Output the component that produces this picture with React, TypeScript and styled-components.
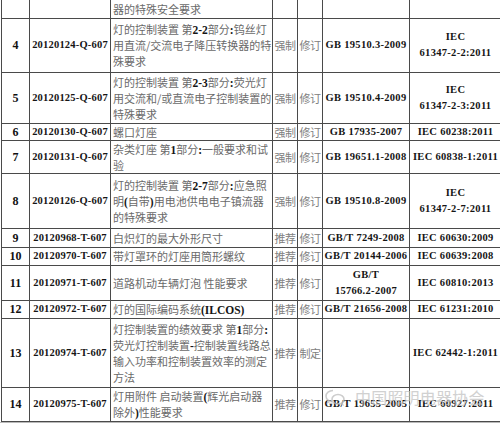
import React from "react";
import styled, { createGlobalStyle } from "styled-components";

const Global = createGlobalStyle`
  html, body { margin: 0; padding: 0; background: #b9b9b9; overflow: hidden; }
  body { width: 500px; height: 423px; }
`;

const Page = styled.div`
  position: relative;
  width: 500px;
  padding-left: 1px;
  box-sizing: border-box;
  background: #fff;
`;

const Table = styled.table`
  border-collapse: collapse;
  table-layout: fixed;
  width: 500px;
  background: #fff;
`;

const Row = styled.tr<{ $h: number }>`
  height: ${(p) => p.$h}px;
`;

const Cell = styled.td<{ $top?: boolean }>`
  border: 1px solid #4a4a4a;
  ${(p) => (p.$top ? "border-top: none;" : "")}
  padding: 0;
  vertical-align: middle;
  line-height: 16px;
  overflow: hidden;
  white-space: nowrap;
`;

const NumCell = styled(Cell)`
  text-align: center;
  font-family: "Liberation Serif", serif;
  font-weight: bold;
  font-size: 12px;
  color: #111;
`;

const CodeCell = styled(Cell)`
  text-align: center;
  font-family: "Liberation Serif", serif;
  font-weight: bold;
  font-size: 10.5px;
  letter-spacing: 0.2px;
  color: #151515;
`;

const TitleCell = styled(Cell)`
  text-align: left;
  padding-left: 2px;
  font-family: "Noto Sans CJK SC", sans-serif;
  font-size: 11px;
  color: #6a6a6a;
`;

const TagCell = styled(Cell)`
  text-align: center;
  font-family: "Noto Sans CJK SC", sans-serif;
  font-size: 11px;
  color: #808080;
  letter-spacing: -0.5px;
`;

const StdCell = styled(Cell)`
  text-align: center;
  font-family: "Liberation Serif", serif;
  font-weight: bold;
  font-size: 10.5px;
  letter-spacing: 0.3px;
  color: #151515;
`;

const B = styled.span`
  font-family: "Liberation Serif", serif;
  font-weight: bold;
  color: #151515;
  font-size: 11.5px;
  line-height: 8px;
`;

const Watermark = styled.div`
  position: absolute;
  left: 324px;
  top: 387px;
  display: flex;
  align-items: center;
  gap: 9px;
  pointer-events: none;
  opacity: 0.75;
`;

const WatermarkText = styled.span`
  font-family: "Noto Sans CJK SC", sans-serif;
  font-size: 16px;
  letter-spacing: 0.2px;
  color: #c2c2c2;
  line-height: 20px;
`;

type R = {
  n: string;
  code: string;
  title: React.ReactNode;
  type: string;
  op: string;
  gb: React.ReactNode;
  iec: React.ReactNode;
  h: number;
};

const rows: R[] = [
  {
    n: "4",
    code: "20120124-Q-607",
    title: (
      <>
        灯的控制装置 第<B>2-2</B>部分<B>:</B>钨丝灯
        <br />
        用直流/交流电子降压转换器的特
        <br />
        殊要求
      </>
    ),
    type: "强制",
    op: "修订",
    gb: "GB 19510.3-2009",
    iec: (
      <>
        IEC
        <br />
        61347-2-2:2011
      </>
    ),
    h: 54,
  },
  {
    n: "5",
    code: "20120125-Q-607",
    title: (
      <>
        灯的控制装置 第<B>2-3</B>部分<B>:</B>荧光灯
        <br />
        用交流和/或直流电子控制装置的
        <br />
        特殊要求
      </>
    ),
    type: "强制",
    op: "修订",
    gb: "GB 19510.4-2009",
    iec: (
      <>
        IEC
        <br />
        61347-2-3:2011
      </>
    ),
    h: 51,
  },
  {
    n: "6",
    code: "20120130-Q-607",
    title: <>螺口灯座</>,
    type: "强制",
    op: "修订",
    gb: "GB 17935-2007",
    iec: "IEC 60238:2011",
    h: 17,
  },
  {
    n: "7",
    code: "20120131-Q-607",
    title: (
      <>
        杂类灯座 第<B>1</B>部分<B>:</B>一般要求和试
        <br />
        验
      </>
    ),
    type: "强制",
    op: "修订",
    gb: "GB 19651.1-2008",
    iec: "IEC 60838-1:2011",
    h: 33,
  },
  {
    n: "8",
    code: "20120126-Q-607",
    title: (
      <>
        灯的控制装置 第<B>2-7</B>部分<B>:</B>应急照
        <br />
        明<B>(</B>自带<B>)</B>用电池供电电子镇流器
        <br />
        的特殊要求
      </>
    ),
    type: "强制",
    op: "修订",
    gb: "GB 19510.8-2009",
    iec: (
      <>
        IEC
        <br />
        61347-2-7:2011
      </>
    ),
    h: 55,
  },
  {
    n: "9",
    code: "20120968-T-607",
    title: <>白炽灯的最大外形尺寸</>,
    type: "推荐",
    op: "修订",
    gb: "GB/T 7249-2008",
    iec: "IEC 60630:2009",
    h: 19,
  },
  {
    n: "10",
    code: "20120970-T-607",
    title: <>带灯罩环的灯座用筒形螺纹</>,
    type: "推荐",
    op: "修订",
    gb: "GB/T 20144-2006",
    iec: "IEC 60639:2008",
    h: 18,
  },
  {
    n: "11",
    code: "20120971-T-607",
    title: <>道路机动车辆灯泡 性能要求</>,
    type: "推荐",
    op: "修订",
    gb: (
      <>
        GB/T
        <br />
        15766.2-2007
      </>
    ),
    iec: "IEC 60810:2013",
    h: 35,
  },
  {
    n: "12",
    code: "20120972-T-607",
    title: (
      <>
        灯的国际编码系统<B>(ILCOS)</B>
      </>
    ),
    type: "推荐",
    op: "修订",
    gb: "GB/T 21656-2008",
    iec: "IEC 61231:2010",
    h: 18,
  },
  {
    n: "13",
    code: "20120974-T-607",
    title: (
      <>
        灯控制装置的绩效要求 第<B>1</B>部分<B>:</B>
        <br />
        荧光灯控制装置<B>-</B>控制装置线路总
        <br />
        输入功率和控制装置效率的测定
        <br />
        方法
      </>
    ),
    type: "推荐",
    op: "制定",
    gb: "",
    iec: "IEC 62442-1:2011",
    h: 69,
  },
  {
    n: "14",
    code: "20120975-T-607",
    title: (
      <>
        灯用附件 启动装置<B>(</B>辉光启动器
        <br />
        除外<B>)</B>性能要求
      </>
    ),
    type: "推荐",
    op: "修订",
    gb: "GB/T 19655-2005",
    iec: "IEC 60927:2011",
    h: 34,
  },
];

const WeChatMark = () => (
  <svg width="22" height="18" viewBox="0 0 22 18" fill="none" stroke="#bdbdbd" strokeWidth="1.6">
    <path d="M9 2.5c-4 0-7 2.6-7 5.7 0 1.7.9 3.2 2.4 4.2l-.6 2 2.3-1.2c.9.3 1.9.5 2.9.5" />
    <path d="M14 6.5c3.3 0 6 2.2 6 4.8 0 1.4-.7 2.6-1.9 3.5l.5 1.7-2-1c-.8.3-1.7.4-2.6.4-3.3 0-6-2.1-6-4.7s2.7-4.7 6-4.7z" />
  </svg>
);

export default function App() {
  return (
    <>
      <Global />
      <Page>
        <Table>
          <colgroup>
            <col style={{ width: 28 }} />
            <col style={{ width: 81 }} />
            <col style={{ width: 162 }} />
            <col style={{ width: 25 }} />
            <col style={{ width: 25 }} />
            <col style={{ width: 87 }} />
            <col style={{ width: 92 }} />
          </colgroup>
          <tbody>
            <Row $h={18}>
              <NumCell $top />
              <CodeCell $top />
              <TitleCell $top>器的特殊安全要求</TitleCell>
              <TagCell $top />
              <TagCell $top />
              <StdCell $top />
              <StdCell $top />
            </Row>
            {rows.map((r) => (
              <Row key={r.n} $h={r.h}>
                <NumCell>{r.n}</NumCell>
                <CodeCell>{r.code}</CodeCell>
                <TitleCell>{r.title}</TitleCell>
                <TagCell>{r.type}</TagCell>
                <TagCell>{r.op}</TagCell>
                <StdCell>{r.gb}</StdCell>
                <StdCell>{r.iec}</StdCell>
              </Row>
            ))}
          </tbody>
        </Table>
        <Watermark>
          <WeChatMark />
          <WatermarkText>中国照明电器协会</WatermarkText>
        </Watermark>
      </Page>
    </>
  );
}
